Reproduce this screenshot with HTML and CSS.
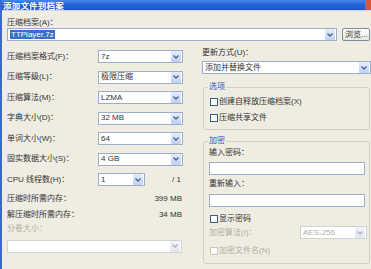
FILE: index.html
```html
<!DOCTYPE html>
<html>
<head>
<meta charset="utf-8">
<link rel="stylesheet" href="styles.css">
</head>
<body>
<div class="window">
  <div class="titlebar"><span class="title">添加文件到档案</span><span class="close"></span></div>
  <div class="content">
    <div class="lbl archive-lbl">压缩档案(A)：</div>
    <div class="archive-row">
      <div class="combo wide"><span class="value"><span class="sel">TTPlayer.7z</span></span><span class="drop"><svg width="6" height="4" viewBox="0 0 6 4"><path d="M0.5 0.5 L3 3 L5.5 0.5" fill="none" stroke="#4d6185" stroke-width="1.3"/></svg></span></div>
      <div class="btn">浏览...</div>
    </div>
    <div class="columns">
      <div class="left">
        <div class="row"><span class="lbl name">压缩档案格式(F)：</span><div class="combo"><span class="value">7z</span><span class="drop"><svg width="6" height="4" viewBox="0 0 6 4"><path d="M0.5 0.5 L3 3 L5.5 0.5" fill="none" stroke="#4d6185" stroke-width="1.3"/></svg></span></div></div>
        <div class="row"><span class="lbl name">压缩等级(L)：</span><div class="combo"><span class="value">极限压缩</span><span class="drop"><svg width="6" height="4" viewBox="0 0 6 4"><path d="M0.5 0.5 L3 3 L5.5 0.5" fill="none" stroke="#4d6185" stroke-width="1.3"/></svg></span></div></div>
        <div class="row"><span class="lbl name">压缩算法(M)：</span><div class="combo"><span class="value">LZMA</span><span class="drop"><svg width="6" height="4" viewBox="0 0 6 4"><path d="M0.5 0.5 L3 3 L5.5 0.5" fill="none" stroke="#4d6185" stroke-width="1.3"/></svg></span></div></div>
        <div class="row"><span class="lbl name">字典大小(D)：</span><div class="combo"><span class="value">32 MB</span><span class="drop"><svg width="6" height="4" viewBox="0 0 6 4"><path d="M0.5 0.5 L3 3 L5.5 0.5" fill="none" stroke="#4d6185" stroke-width="1.3"/></svg></span></div></div>
        <div class="row"><span class="lbl name">单词大小(W)：</span><div class="combo"><span class="value">64</span><span class="drop"><svg width="6" height="4" viewBox="0 0 6 4"><path d="M0.5 0.5 L3 3 L5.5 0.5" fill="none" stroke="#4d6185" stroke-width="1.3"/></svg></span></div></div>
        <div class="row"><span class="lbl name">固实数据大小(S)：</span><div class="combo"><span class="value">4 GB</span><span class="drop"><svg width="6" height="4" viewBox="0 0 6 4"><path d="M0.5 0.5 L3 3 L5.5 0.5" fill="none" stroke="#4d6185" stroke-width="1.3"/></svg></span></div></div>
        <div class="row"><span class="lbl name">CPU 线程数(H)：</span><div class="combo short"><span class="value">1</span><span class="drop"><svg width="6" height="4" viewBox="0 0 6 4"><path d="M0.5 0.5 L3 3 L5.5 0.5" fill="none" stroke="#4d6185" stroke-width="1.3"/></svg></span></div><span class="of">/ 1</span></div>
        <div class="info first"><span>压缩时所需内存：</span><span>399 MB</span></div>
        <div class="info second"><span>解压缩时所需内存：</span><span>34 MB</span></div>
        <div class="lbl disabled split-lbl">分卷大小：</div>
        <div class="combo full disabled"><span class="value"></span><span class="drop"><svg width="6" height="4" viewBox="0 0 6 4"><path d="M0.5 0.5 L3 3 L5.5 0.5" fill="none" stroke="#a8b0c0" stroke-width="1.3"/></svg></span></div>
      </div>
      <div class="right">
        <div class="lbl">更新方式(U)：</div>
        <div class="combo update"><span class="value">添加并替换文件</span><span class="drop"><svg width="6" height="4" viewBox="0 0 6 4"><path d="M0.5 0.5 L3 3 L5.5 0.5" fill="none" stroke="#4d6185" stroke-width="1.3"/></svg></span></div>
        <div class="group options">
          <div class="group-title">选项</div>
          <div class="check c1"><span class="box"></span>创建自释放压缩档案(X)</div>
          <div class="check c2"><span class="box"></span>压缩共享文件</div>
        </div>
        <div class="group crypt">
          <div class="group-title">加密</div>
          <div class="lbl pw1">输入密码：</div>
          <div class="input i1"></div>
          <div class="lbl pw2">重新输入：</div>
          <div class="input i2"></div>
          <div class="check c3"><span class="box"></span>显示密码</div>
          <div class="algo-row"><span class="lbl disabled algo-name">加密算法(I)：</span><div class="combo algo disabled"><span class="value">AES-256</span><span class="drop"><svg width="6" height="4" viewBox="0 0 6 4"><path d="M0.5 0.5 L3 3 L5.5 0.5" fill="none" stroke="#a8b0c0" stroke-width="1.3"/></svg></span></div></div>
          <div class="check c4 disabled"><span class="box"></span>加密文件名(N)</div>
        </div>
      </div>
    </div>
  </div>
</div>
</body>
</html>
```

FILE: styles.css
```css
* { box-sizing: border-box; }
html, body { margin: 0; padding: 0; background: #efece1; }
.window {
  width: 371px;
  height: 269px;
  overflow: hidden;
  border-left: 2px solid #3b66d4;
  background: #efece2;
  font-family: "Liberation Sans", "Noto Sans CJK SC", sans-serif;
  font-size: 8px;
  color: #333;
}
.titlebar {
  height: 11px;
  background: linear-gradient(#4a86ec, #2563d8 45%, #1c55c8);
  display: flex;
  align-items: center;
  justify-content: space-between;
  border-bottom: 1px solid #c9d5ee;
}
.title {
  color: #fff;
  font-weight: bold;
  font-size: 8.5px;
  line-height: 10px;
  padding-left: 1px;
  letter-spacing: 0.2px;
  font-family: "Noto Sans CJK SC", sans-serif;
}
.close {
  width: 6px;
  height: 10px;
  background: #d8573a;
}
.content { padding-left: 5px; }
.lbl { line-height: 10px; white-space: nowrap; }
.archive-lbl { margin-top: 7px; }
.archive-row { display: flex; gap: 5px; }
.combo {
  height: 13px;
  border: 1px solid #9bb0c8;
  background: #fff;
  display: flex;
  align-items: center;
  justify-content: space-between;
  padding: 0 1px 0 2px;
}
.combo .value { line-height: 10px; white-space: nowrap; }
.combo .drop {
  width: 10px;
  height: 11px;
  border-radius: 1px;
  background: linear-gradient(#e4ecfd, #bfd0f6);
  display: flex;
  align-items: center;
  justify-content: center;
}
.combo.wide { width: 330px; }
.sel { background: #3a6fc8; color: #fff; padding: 0 1px; }
.btn {
  width: 28px;
  height: 13px;
  border: 1px solid #7b8aa0;
  border-radius: 2px;
  background: linear-gradient(#fdfdfb, #e9e7dd);
  line-height: 11px;
  padding-left: 2px;
  white-space: nowrap;
}
.columns { display: flex; margin-top: 5px; }
.left { width: 176px; flex: none; padding-top: 4px; }
.row { display: flex; align-items: center; height: 13px; margin-bottom: 7.5px; }
.row .name { width: 91px; }
.row .combo { width: 85px; }
.row .combo.short { width: 47px; }
.of { margin-left: 27px; line-height: 10px; }
.info { display: flex; justify-content: space-between; line-height: 10px; width: 175px; }
.info.first { margin-top: 4.5px; }
.info.second { margin-top: 6px; }
.split-lbl { margin-top: 4px; }
.combo.full { width: 175px; margin-top: 6px; }
.disabled { color: #b3ae9e; }
.combo.disabled { border-color: #cfd3d6; }
.combo.disabled .drop { background: linear-gradient(#f2f4f8, #e2e7f0); }
.right { margin-left: 19px; width: 169px; padding-top: 2px; }
.combo.update { width: 169px; margin-top: 3px; }
.group {
  border: 1px solid #d4d0bf;
  border-radius: 3px;
  width: 167px;
  margin-left: 1px;
  padding-left: 5px;
}
.group-title {
  color: #2956c9;
  line-height: 10px;
  margin-top: -6px;
  margin-left: -1px;
  padding: 0 1px;
  background: #efece2;
  width: max-content;
}
.options { margin-top: 13px; padding-bottom: 6.5px; }
.check { display: flex; align-items: center; line-height: 10px; white-space: nowrap; }
.check .box {
  width: 8px;
  height: 8px;
  border: 1px solid #3a5d86;
  background: #fff;
  margin-right: 1px;
  margin-left: 1px;
}
.check.disabled .box { border-color: #c9c6b8; }
.c1 { margin-top: 4.5px; }
.c2 { margin-top: 6px; }
.crypt { margin-top: 11px; padding-bottom: 7px; }
.pw1 { margin-top: 2px; }
.input { width: 156px; height: 13px; border: 1px solid #9bb0c8; background: #fff; }
.i1 { margin-top: 4px; }
.pw2 { margin-top: 4px; }
.i2 { margin-top: 5px; }
.c3 { margin-top: 7px; }
.algo-row { display: flex; align-items: center; height: 13px; margin-top: 2px; }
.algo-name { width: 91px; }
.combo.algo { width: 67px; }
.c4 { margin-top: 7px; }
```
